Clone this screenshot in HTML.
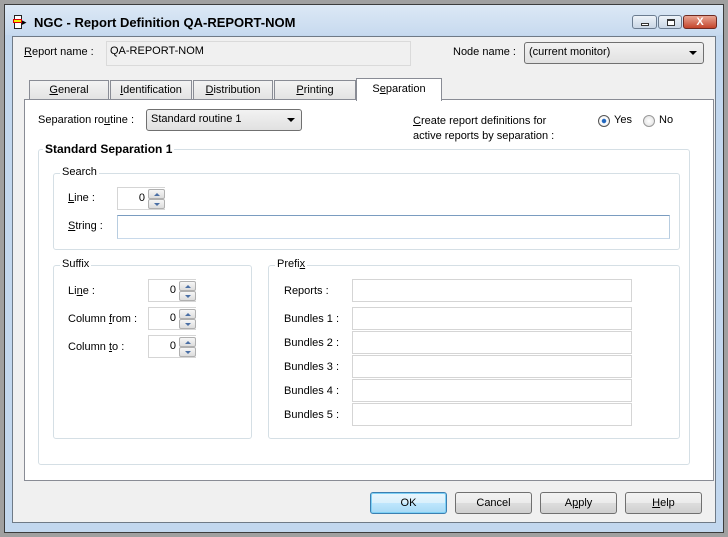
<!DOCTYPE html>
<html><head><style>
*{box-sizing:border-box}
body{margin:0;width:728px;height:537px;background:#a0a0a0;font-family:"Liberation Sans",sans-serif;font-size:11px;color:#000;position:relative;overflow:hidden}
.a{position:absolute}
.lbl{position:absolute;font-size:11px;white-space:nowrap}
.inp{position:absolute;background:#fff;border:1px solid #abadb3;border-top-color:#abadb3}
.grp{position:absolute;border:1px solid #d5dfe5;border-radius:3px}
.gt{position:absolute;top:-8px;left:6px;background:#fff;padding:0 2px;font-size:11px}
.spin{position:absolute;height:23px;width:48px;background:#fff;border:1px solid #d5d5d5;border-right:none}
.spin span{position:absolute;right:20px;top:4px}
.spin i{position:absolute;right:0;width:17px;height:10px;border:1px solid #b0b0b0;background:linear-gradient(#f6f6f6,#dcdcdc);border-radius:2px}
.spin i:before{content:"";position:absolute;left:5px;border-left:3px solid transparent;border-right:3px solid transparent}
.spin i.u{top:1px}.spin i.u:before{top:3px;border-bottom:3px solid #4a6fa5}
.spin i.d{top:11px}.spin i.d:before{top:3px;border-top:3px solid #4a6fa5}
.btn{position:absolute;top:492px;width:77px;height:22px;border:1px solid #707070;border-radius:3px;background:linear-gradient(#f2f2f2 0,#ebebeb 50%,#dddddd 51%,#cfcfcf 100%);text-align:center;line-height:20px;font-size:11px}
.tab{position:absolute;top:80px;height:19px;border:1px solid #898c95;border-bottom:none;background:linear-gradient(#f3f3f3,#e3e3e3);text-align:center;line-height:19px;font-size:11px}
.combo{position:absolute;background:linear-gradient(#f2f2f2,#e1e1e1);border:1px solid #707070;border-radius:3px;font-size:11px;padding:3px 0 0 4px}
.combo:after{content:"";position:absolute;right:6px;top:8px;border-left:4px solid transparent;border-right:4px solid transparent;border-top:4px solid #000}
u{text-decoration:underline}
</style></head><body>
<div class="a" style="left:4px;top:4px;width:720px;height:529px;border:1px solid #3c3c3c;background:#c2d7ee"></div>
<div class="a" style="left:5px;top:5px;width:718px;height:30px;background:linear-gradient(#dce8f5,#c7daef)"></div>
<div class="a" style="left:12px;top:36px;width:704px;height:487px;border:1px solid #6f7a86;background:#f0f0f0"></div>
<!-- title icon -->
<div class="a" style="left:14px;top:15px;width:8px;height:14px;border:1px solid #222;background:#fff"></div>
<div class="a" style="left:13px;top:19px;width:9px;height:4px;border:1px solid #d00;background:#ee0"></div>
<div class="a" style="left:22px;top:17px;font-size:9px">▸</div>
<div class="lbl" style="left:34px;top:15px;font-size:13px;font-weight:bold">NGC - Report Definition QA-REPORT-NOM</div>
<!-- caption buttons -->
<div class="a" style="left:632px;top:15px;width:25px;height:14px;border:1px solid #6b7c90;border-radius:3px;background:linear-gradient(#eef3f9,#c9d6e5)"><div class="a" style="left:8px;top:7px;width:8px;height:3px;border:1px solid #333;background:#fff"></div></div>
<div class="a" style="left:658px;top:15px;width:24px;height:14px;border:1px solid #6b7c90;border-radius:3px;background:linear-gradient(#eef3f9,#c9d6e5)"><div class="a" style="left:8px;top:3px;width:8px;height:7px;border:1px solid #333;border-top-width:2px;background:#fff"></div></div>
<div class="a" style="left:683px;top:15px;width:34px;height:14px;border:1px solid #6e2a22;border-radius:3px;background:linear-gradient(#e8a593,#c4452c);color:#fff;font-weight:bold;text-align:center;line-height:12px;font-size:11px">X</div>
<!-- report name -->
<div class="lbl" style="left:24px;top:46px"><u>R</u>eport name :</div>
<div class="a" style="left:106px;top:41px;width:305px;height:25px;border:1px solid #dadada;background:#f0f0f0"></div>
<div class="lbl" style="left:110px;top:45px">QA-REPORT-NOM</div>
<div class="lbl" style="left:453px;top:46px">Node name :</div>
<div class="combo" style="left:524px;top:42px;width:180px;height:22px;border-radius:3px">(current monitor)</div>
<!-- tabs -->
<div class="a" style="left:24px;top:99px;width:690px;height:382px;background:#fff;border:1px solid #898c95"></div>
<div class="tab" style="left:29px;width:80px"><u>G</u>eneral</div>
<div class="tab" style="left:110px;width:82px"><u>I</u>dentification</div>
<div class="tab" style="left:193px;width:80px"><u>D</u>istribution</div>
<div class="tab" style="left:274px;width:82px"><u>P</u>rinting</div>
<div class="a" style="left:356px;top:78px;width:86px;height:23px;border:1px solid #898c95;border-bottom:none;background:#fff;text-align:center;line-height:20px">S<u>e</u>paration</div>
<!-- separation routine -->
<div class="lbl" style="left:38px;top:114px">Separation ro<u>u</u>tine :</div>
<div class="combo" style="left:146px;top:109px;width:156px;height:22px">Standard routine 1</div>
<div class="lbl" style="left:413px;top:114px;line-height:15px"><u>C</u>reate report definitions for<br>active reports by separation :</div>
<div class="a" style="left:598px;top:115px;width:12px;height:12px;border-radius:50%;border:1px solid #555;background:radial-gradient(#1e5eb0 0,#2a70c8 28%,#fff 36%,#e6e6e6 100%)"></div>
<div class="lbl" style="left:614px;top:114px">Yes</div>
<div class="a" style="left:643px;top:115px;width:12px;height:12px;border-radius:50%;border:1px solid #999;background:radial-gradient(#fff,#ddd)"></div>
<div class="lbl" style="left:659px;top:114px">No</div>
<!-- groups -->
<div class="grp" style="left:38px;top:149px;width:652px;height:316px"><div class="gt" style="font-weight:bold;font-size:12px;left:4px">Standard Separation 1</div></div>
<div class="grp" style="left:53px;top:173px;width:627px;height:77px"><div class="gt">Search</div></div>
<div class="lbl" style="left:68px;top:192px"><u>L</u>ine :</div>
<div class="spin" style="left:117px;top:187px"><span>0</span><i class="u"></i><i class="d"></i></div>
<div class="lbl" style="left:68px;top:220px"><u>S</u>tring :</div>
<div class="inp" style="left:117px;top:215px;width:553px;height:24px;border-color:#7a9cc0 #b8cde0 #c8d9ea #b8cde0"></div>
<div class="grp" style="left:53px;top:265px;width:199px;height:174px"><div class="gt">Suffix</div></div>
<div class="lbl" style="left:68px;top:285px">Li<u>n</u>e :</div>
<div class="spin" style="left:148px;top:279px"><span>0</span><i class="u"></i><i class="d"></i></div>
<div class="lbl" style="left:68px;top:313px">Column <u>f</u>rom :</div>
<div class="spin" style="left:148px;top:307px"><span>0</span><i class="u"></i><i class="d"></i></div>
<div class="lbl" style="left:68px;top:341px">Column <u>t</u>o :</div>
<div class="spin" style="left:148px;top:335px"><span>0</span><i class="u"></i><i class="d"></i></div>
<div class="grp" style="left:268px;top:265px;width:412px;height:174px"><div class="gt">Prefi<u>x</u></div></div>
<div class="lbl" style="left:284px;top:285px">Reports :</div>
<div class="inp" style="left:352px;top:279px;width:280px;height:23px;border-color:#d5d5d5"></div>
<div class="lbl" style="left:284px;top:313px">Bundles 1 :</div>
<div class="inp" style="left:352px;top:307px;width:280px;height:23px;border-color:#d5d5d5"></div>
<div class="lbl" style="left:284px;top:337px">Bundles 2 :</div>
<div class="inp" style="left:352px;top:331px;width:280px;height:23px;border-color:#d5d5d5"></div>
<div class="lbl" style="left:284px;top:361px">Bundles 3 :</div>
<div class="inp" style="left:352px;top:355px;width:280px;height:23px;border-color:#d5d5d5"></div>
<div class="lbl" style="left:284px;top:385px">Bundles 4 :</div>
<div class="inp" style="left:352px;top:379px;width:280px;height:23px;border-color:#d5d5d5"></div>
<div class="lbl" style="left:284px;top:409px">Bundles 5 :</div>
<div class="inp" style="left:352px;top:403px;width:280px;height:23px;border-color:#d5d5d5"></div>
<!-- buttons -->
<div class="btn" style="left:370px;border-color:#3c7fb1;background:linear-gradient(#eaf6fd,#d9f0fc 50%,#bee6fd 51%,#a7d9f5);box-shadow:inset 0 0 0 1px #7ed0f5">OK</div>
<div class="btn" style="left:455px">Cancel</div>
<div class="btn" style="left:540px">A<u>p</u>ply</div>
<div class="btn" style="left:625px"><u>H</u>elp</div>
</body></html>
